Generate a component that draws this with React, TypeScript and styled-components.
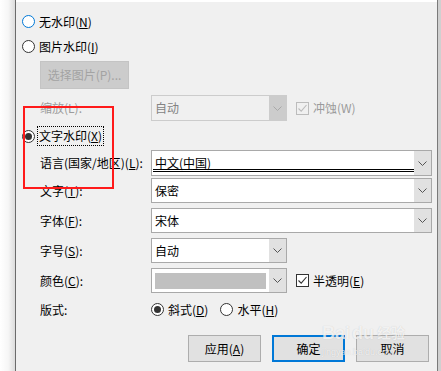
import React from "react";
import styled, { createGlobalStyle, css } from "styled-components";

const Global = createGlobalStyle`
  html, body { margin: 0; padding: 0; background: #f0f0f0; }
  body {
    font-family: "Noto Sans CJK SC", "Microsoft YaHei", "Liberation Sans", sans-serif;
    font-size: 12px;
    color: #000;
  }
  u { text-underline-offset: 1px; text-decoration-thickness: 1px; }
`;

const Frame = styled.div`
  position: relative;
  display: flex;
  width: 441px;
  height: 371px;
  overflow: hidden;
`;

const LeftShade = styled.div`
  width: 15px;
  background: linear-gradient(to right, #ffffff 0%, #f6f6f6 55%, #dcdcdc 100%);
`;

const EdgeLine = styled.div<{ $color: string }>`
  width: 1px;
  background: ${(p) => p.$color};
`;

const RightShade = styled.div`
  width: 3px;
  background: #d0d0d0;
`;

const Panel = styled.div`
  flex: 1;
  background: #f0f0f0;
  border-top: 2px solid #ffffff;
  display: flex;
  flex-direction: column;
`;

const RadioRow = styled.div<{ $mt: number; $h?: number }>`
  display: flex;
  align-items: center;
  gap: 4px;
  padding-left: 6px;
  margin-top: ${(p) => p.$mt}px;
  height: ${(p) => p.$h ?? 17}px;
  line-height: 16px;
`;

const RadioCircle = styled.span<{ $checked?: boolean; $hover?: boolean }>`
  position: relative;
  box-sizing: border-box;
  width: 13px;
  height: 13px;
  border-radius: 50%;
  border: 1px solid ${(p) => (p.$hover ? "#0078d7" : "#333333")};
  background: #ffffff;
  flex: none;
  ${(p) =>
    p.$checked &&
    css`
      &::after {
        content: "";
        position: absolute;
        left: 2px;
        top: 2px;
        width: 7px;
        height: 7px;
        border-radius: 50%;
        background: #333333;
      }
    `}
`;

const FocusLabel = styled.span`
  border: 1px dotted #000;
  padding: 1px 1px;
  margin-left: -2px;
`;

const FieldRow = styled.div<{ $mt: number; $h?: number }>`
  display: flex;
  align-items: center;
  padding-left: 24px;
  margin-top: ${(p) => p.$mt}px;
  height: ${(p) => p.$h ?? 25}px;
`;

const Label = styled.span<{ $disabled?: boolean }>`
  width: 111px;
  flex: none;
  color: ${(p) => (p.$disabled ? "#9b9b9b" : "#000")};
  line-height: 16px;
`;

const SelectBox = styled.div<{ $w: number; $h?: number; $disabled?: boolean }>`
  box-sizing: border-box;
  width: ${(p) => p.$w}px;
  height: ${(p) => p.$h ?? 25}px;
  border: 1px solid ${(p) => (p.$disabled ? "#cccccc" : "#a9a9a9")};
  background: ${(p) => (p.$disabled ? "#f0f0f0" : "#ffffff")};
  display: flex;
  flex: none;
`;

const SelectText = styled.div<{ $disabled?: boolean }>`
  flex: 1;
  display: flex;
  align-items: center;
  padding-left: 3px;
  color: ${(p) => (p.$disabled ? "#838383" : "#000")};
  line-height: 16px;
  position: relative;
`;

const DoubleLine = styled.span`
  position: absolute;
  left: 1px;
  right: 0px;
  bottom: 3px;
  height: 0;
  border-bottom: 3px double #000;
`;

const Swatch = styled.div`
  flex: 1;
  margin: 4px 3px 3px 3px;
  background: #c0c0c0;
`;

const ArrowButton = styled.div<{ $disabled?: boolean }>`
  width: 17px;
  flex: none;
  display: flex;
  align-items: center;
  justify-content: center;
  background: ${(p) => (p.$disabled ? "#cccccc" : "#e1e1e1")};
  color: ${(p) => (p.$disabled ? "#a8a8a8" : "#555555")};
`;

const Chevron = () => (
  <svg width="9" height="5" viewBox="0 0 9 5" fill="none">
    <path d="M0.5 0.5 L4.5 4.5 L8.5 0.5" stroke="currentColor" strokeWidth="1" />
  </svg>
);

const Select = ({
  w,
  h,
  text,
  disabled,
  doubleLine,
  swatch,
}: {
  w: number;
  h?: number;
  text?: string;
  disabled?: boolean;
  doubleLine?: boolean;
  swatch?: boolean;
}) => (
  <SelectBox $w={w} $h={h} $disabled={disabled}>
    {swatch ? (
      <Swatch />
    ) : (
      <SelectText $disabled={disabled}>
        {text}
        {doubleLine && <DoubleLine />}
      </SelectText>
    )}
    <ArrowButton $disabled={disabled}>
      <Chevron />
    </ArrowButton>
  </SelectBox>
);

const CheckWrap = styled.span<{ $disabled?: boolean }>`
  display: flex;
  align-items: center;
  gap: 4px;
  margin-left: 9px;
  color: ${(p) => (p.$disabled ? "#9b9b9b" : "#000")};
  line-height: 16px;
`;

const CheckBoxSquare = styled.span<{ $disabled?: boolean }>`
  box-sizing: border-box;
  width: 13px;
  height: 13px;
  border: 1px solid ${(p) => (p.$disabled ? "#bcbcbc" : "#333333")};
  background: ${(p) => (p.$disabled ? "#f0f0f0" : "#ffffff")};
  color: ${(p) => (p.$disabled ? "#bcbcbc" : "#333333")};
  display: flex;
  align-items: center;
  justify-content: center;
  flex: none;
`;

const Check = ({ disabled, label }: { disabled?: boolean; label: React.ReactNode }) => (
  <CheckWrap $disabled={disabled}>
    <CheckBoxSquare $disabled={disabled}>
      <svg width="11" height="11" viewBox="0 0 11 11" fill="none">
        <path d="M1.5 5.5 L4.2 8.2 L9.5 2" stroke="currentColor" strokeWidth="1.1" />
      </svg>
    </CheckBoxSquare>
    <span>{label}</span>
  </CheckWrap>
);

const InlineRadio = styled.span<{ $ml?: number }>`
  display: flex;
  align-items: center;
  gap: 4px;
  margin-left: ${(p) => p.$ml ?? 0}px;
  line-height: 16px;
`;

const PickButton = styled.div`
  box-sizing: border-box;
  margin-left: 24px;
  width: 89px;
  height: 28px;
  background: #cccccc;
  border: 1px solid #c4c4c4;
  color: #a3a3a3;
  display: flex;
  align-items: center;
  justify-content: center;
  line-height: 16px;
`;

const ButtonBar = styled.div`
  display: flex;
  justify-content: flex-end;
  gap: 11px;
  padding-right: 8px;
  margin-top: 17px;
`;

const DialogButton = styled.div<{ $default?: boolean }>`
  box-sizing: border-box;
  width: 73px;
  height: 27px;
  background: #e1e1e1;
  border: ${(p) => (p.$default ? "2px solid #0078d7" : "1px solid #adadad")};
  display: flex;
  align-items: center;
  justify-content: center;
  line-height: 16px;
`;

const RedMark = styled.div`
  position: absolute;
  left: 23px;
  top: 106px;
  width: 91px;
  height: 83px;
  box-sizing: border-box;
  border: 2px solid #ff1a1a;
  pointer-events: none;
`;

const Watermark = styled.div`
  position: absolute;
  left: 322px;
  top: 302px;
  width: 100px;
  color: rgba(255, 255, 255, 0.75);
  text-shadow: 0 0 1px rgba(0, 0, 0, 0.18);
  font-family: "Liberation Sans", "Noto Sans CJK SC", sans-serif;
  pointer-events: none;
  display: flex;
  flex-direction: column;
  align-items: flex-start;
`;

const WmLogo = styled.div`
  display: flex;
  align-items: flex-end;
  font-size: 18px;
  font-weight: bold;
  line-height: 18px;
  margin-top: 22px;
`;

const WmSmall = styled.div`
  font-size: 9px;
  line-height: 12px;
  margin-top: 4px;
`;

export default function App() {
  return (
    <>
      <Global />
      <Frame>
        <LeftShade />
        <EdgeLine $color="#6b6b6b" />
        <Panel>
          <RadioRow $mt={11}>
            <RadioCircle $hover />
            <span>
              无水印(<u>N</u>)
            </span>
          </RadioRow>
          <RadioRow $mt={8}>
            <RadioCircle />
            <span>
              图片水印(<u>I</u>)
            </span>
          </RadioRow>
          <PickButton style={{ marginTop: 6 }}>选择图片(P)...</PickButton>
          <FieldRow $mt={6} $h={26}>
            <Label $disabled>缩放(L):</Label>
            <Select w={136} h={26} text="自动" disabled />
            <Check disabled label="冲蚀(W)" />
          </FieldRow>
          <RadioRow $mt={5} $h={20}>
            <RadioCircle $checked />
            <FocusLabel>
              文字水印(<u>X</u>)
            </FocusLabel>
          </RadioRow>
          <FieldRow $mt={4} $h={26}>
            <Label>
              语言(国家/地区)(<u>L</u>):
            </Label>
            <Select w={281} h={26} text="中文(中国)" doubleLine />
          </FieldRow>
          <FieldRow $mt={2}>
            <Label>
              文字(<u>T</u>):
            </Label>
            <Select w={281} text="保密" />
          </FieldRow>
          <FieldRow $mt={5}>
            <Label>
              字体(<u>F</u>):
            </Label>
            <Select w={281} text="宋体" />
          </FieldRow>
          <FieldRow $mt={5}>
            <Label>
              字号(<u>S</u>):
            </Label>
            <Select w={136} text="自动" />
          </FieldRow>
          <FieldRow $mt={5}>
            <Label>
              颜色(<u>C</u>):
            </Label>
            <Select w={136} swatch />
            <Check
              label={
                <>
                  半透明(<u>E</u>)
                </>
              }
            />
          </FieldRow>
          <FieldRow $mt={8} $h={17}>
            <Label>版式:</Label>
            <InlineRadio>
              <RadioCircle $checked />
              <span>
                斜式(<u>D</u>)
              </span>
            </InlineRadio>
            <InlineRadio $ml={12}>
              <RadioCircle />
              <span>
                水平(<u>H</u>)
              </span>
            </InlineRadio>
          </FieldRow>
          <ButtonBar>
            <DialogButton>
              <span>
                应用(<u>A</u>)
              </span>
            </DialogButton>
            <DialogButton $default>确定</DialogButton>
            <DialogButton>取消</DialogButton>
          </ButtonBar>
        </Panel>
        <EdgeLine $color="#7a7a7a" />
        <RightShade />
        <RedMark />
        <Watermark>
          <WmLogo>
            <span>Bai</span>
            <span style={{ marginLeft: 2 }}>du</span>
            <span style={{ fontSize: 14, marginLeft: 3 }}>经验</span>
          </WmLogo>
          <WmSmall>jingyan.baidu.com</WmSmall>
        </Watermark>
      </Frame>
    </>
  );
}
